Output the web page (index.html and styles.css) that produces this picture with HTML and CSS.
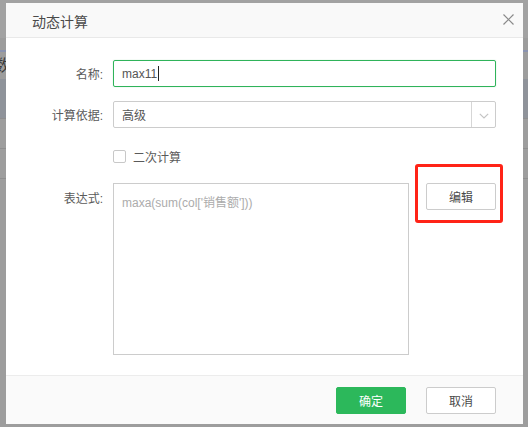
FILE: index.html
```html
<!DOCTYPE html>
<html lang="zh">
<head>
<meta charset="utf-8">
<title>动态计算</title>
<link rel="stylesheet" href="styles.css">
</head>
<body>
<div class="backdrop">
  <div class="bg-band bg-top"></div>
  <div class="bg-band bg-mid"></div>
  <div class="bg-line bg-blue"></div>
  <div class="bg-text">数</div>
  <div class="bg-band bg-dark"></div>
  <div class="bg-line"></div>
  <div class="bg-gap"></div>
  <div class="bg-line"></div>
  <div class="bg-gap"></div>
  <div class="bg-line"></div>
</div>

<div class="dialog">
  <div class="dialog-header">
    <span class="dialog-title">动态计算</span>
    <svg class="close" width="11" height="11" viewBox="0 0 11 11"><path d="M0.5 0.5 L10.5 10.5 M10.5 0.5 L0.5 10.5" stroke="#8a8a8a" stroke-width="1.2" fill="none"/></svg>
  </div>

  <div class="dialog-body">
    <div class="row row-name">
      <label class="label">名称:</label>
      <div class="input input-focus"><span class="value">max11</span><span class="caret"></span></div>
    </div>

    <div class="row row-basis">
      <label class="label">计算依据:</label>
      <div class="select">
        <span class="value">高级</span>
        <span class="select-arrow">
          <svg width="10" height="6" viewBox="0 0 10 6"><path d="M0.8 0.8 L5 5 L9.2 0.8" stroke="#c4c4c4" stroke-width="1.2" fill="none"/></svg>
        </span>
      </div>
    </div>

    <div class="row row-check">
      <span class="label"></span>
      <span class="checkbox"></span>
      <span class="check-text">二次计算</span>
    </div>

    <div class="row row-expr">
      <label class="label label-top">表达式:</label>
      <div class="textarea"><span class="placeholder">maxa(sum(col['销售额']))</span></div>
      <div class="edit-wrap">
        <button class="btn btn-default">编辑</button>
        <span class="highlight"></span>
      </div>
    </div>
  </div>

  <div class="dialog-footer">
    <button class="btn btn-primary">确定</button>
    <button class="btn btn-default">取消</button>
  </div>
</div>
</body>
</html>
```

FILE: styles.css
```css
* { box-sizing: border-box; }

html, body {
  margin: 0;
  padding: 0;
  width: 528px;
  height: 427px;
  overflow: hidden;
  background: #9d9d9d;
  font-family: "Liberation Sans", "Noto Sans CJK SC", Arial, sans-serif;
}

.backdrop {
  width: 528px;
  height: 427px;
  display: flex;
  flex-direction: column;
}

.bg-band { width: 100%; }
.bg-top { height: 38px; background: #a2a2a2; }
.bg-mid { height: 12px; background: #9c9c9c; }
.bg-line { height: 1px; background: #8e8e8e; }
.bg-blue { height: 2px; background: #8a93b0; }
.bg-text {
  height: 27px;
  font-size: 16px;
  line-height: 27px;
  color: #3a3a3a;
  margin-left: -6px;
}
.bg-dark { height: 39px; background: #8f939a; }
.bg-gap { height: 29px; }

.dialog {
  position: absolute;
  left: 6px;
  top: 3px;
  width: 517px;
  height: 421px;
  background: #fff;
  display: flex;
  flex-direction: column;
}

.dialog-header {
  height: 35px;
  background: #f9f9f9;
  border-bottom: 1px solid #e9e9e9;
  display: flex;
  align-items: center;
  justify-content: space-between;
  padding: 0 9px 0 26px;
  flex: none;
}

.dialog-title {
  font-size: 14px;
  color: #4a4a4a;
  padding-top: 1px;
}

.close { display: block; margin-top: -2px; }

.dialog-body {
  flex: 1;
  padding-top: 22px;
}

.row {
  display: flex;
  align-items: center;
}

.label {
  width: 107px;
  flex: none;
  text-align: right;
  padding-right: 10px;
  font-size: 12px;
  color: #5a5a5a;
}

.label-top {
  align-self: flex-start;
  padding-top: 6px;
}

.input, .select {
  width: 383px;
  height: 27px;
  border: 1px solid #cccccc;
  border-radius: 2px;
  display: flex;
  align-items: center;
  padding-left: 8px;
  font-size: 12px;
  color: #555;
}

.input-focus {
  border-color: #2fb35a;
  box-shadow: 0 0 1px rgba(47, 179, 90, 0.5);
}

.caret {
  display: inline-block;
  width: 1px;
  height: 15px;
  background: #222;
  margin-left: 1px;
}

.row-basis { margin-top: 14px; }

.select {
  justify-content: space-between;
  padding-right: 0;
}

.select-arrow {
  width: 24px;
  height: 100%;
  border-left: 1px solid #d6d6d6;
  display: flex;
  align-items: center;
  justify-content: center;
}

.select-arrow svg { display: block; margin-top: 2px; }

.row-check { margin-top: 21px; height: 14px; }

.checkbox {
  width: 13px;
  height: 13px;
  border: 1px solid #c8c8c8;
  border-radius: 2px;
  background: #fff;
}

.check-text {
  font-size: 12px;
  color: #5a5a5a;
  margin-left: 7px;
}

.row-expr {
  margin-top: 20px;
  align-items: flex-start;
}

.textarea {
  width: 296px;
  height: 172px;
  border: 1px solid #cccccc;
  padding: 9px 8px;
  font-size: 12px;
}

.placeholder { color: #acacac; }

.edit-wrap {
  position: relative;
  margin-left: 17px;
}

.btn {
  width: 70px;
  height: 27px;
  font-family: "Liberation Sans", "Noto Sans CJK SC", Arial, sans-serif;
  font-size: 12px;
  border-radius: 2px;
  padding: 0;
  cursor: pointer;
}

.btn-default {
  background: #fff;
  border: 1px solid #cccccc;
  color: #4a4a4a;
}

.btn-primary {
  background: #2cb85b;
  border: 1px solid #2cb85b;
  color: #fff;
}

.highlight {
  position: absolute;
  left: -11px;
  top: -19px;
  width: 88px;
  height: 59px;
  border: 3px solid #ff2317;
  border-radius: 3px;
  pointer-events: none;
}

.dialog-footer {
  height: 49px;
  flex: none;
  background: #fafafa;
  border-top: 1px solid #ececec;
  display: flex;
  justify-content: flex-end;
  align-items: flex-start;
  gap: 20px;
  padding: 11px 27px 0 0;
}
```
